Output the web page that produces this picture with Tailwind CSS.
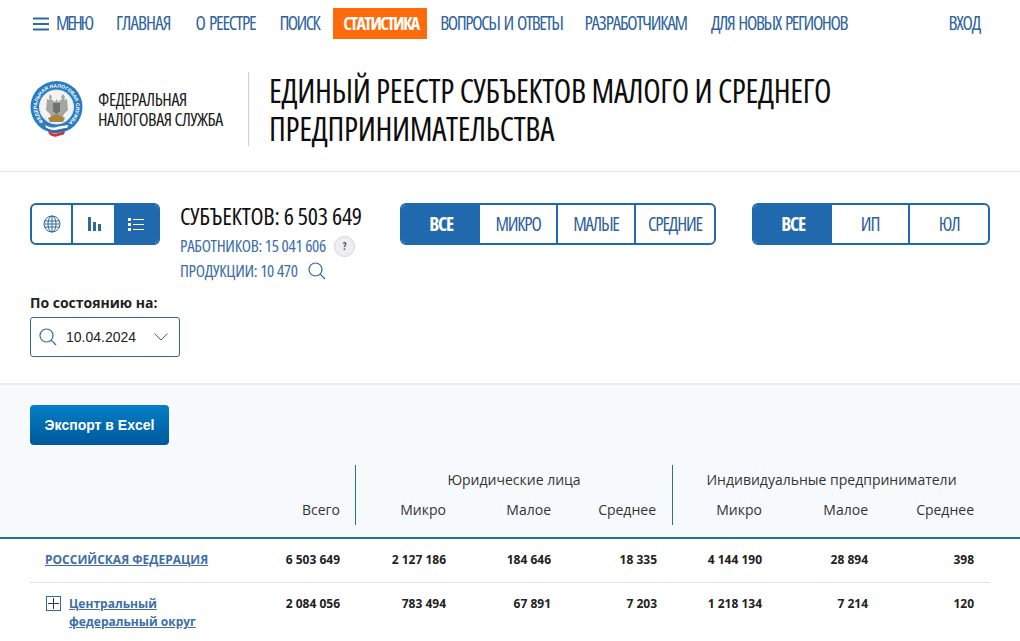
<!DOCTYPE html>
<html lang="ru">
<head>
  <meta charset="UTF-8">
  <title>Статистика - Единый реестр МСП</title>
  <script src="https://cdn.jsdelivr.net/npm/@tailwindcss/browser@4"></script>
</head>
<body class="h-[641px] overflow-hidden bg-white font-['Open_Sans',sans-serif] text-[#1a1a1a]">

<!-- NAV -->
<nav class="flex items-center h-[31px] mt-2 pl-[33px] pr-10 whitespace-nowrap text-[19px] tracking-[-1.2px] [word-spacing:2px] text-[#2f639d] [font-stretch:75%]">
  <svg class="shrink-0 w-4 h-[14px] mr-[7px]" viewBox="0 0 16 14"><path d="M0 1.500h16M0 7h16M0 12.500h16" stroke="#2f6a98" stroke-width="2"/></svg>
  <a class="mr-6 tracking-[-2.2px]">МЕНЮ</a>
  <a class="mr-[25px] tracking-[-0.9px]">ГЛАВНАЯ</a>
  <a class="mr-6">О РЕЕСТРЕ</a>
  <a class="mr-3.5 tracking-[-1.6px]">ПОИСК</a>
  <a class="bg-[#ff6a0a] text-white text-[18px] font-bold px-2.5 w-[94px] h-[31px] leading-[31px] mr-[13px] tracking-[-1.6px]">СТАТИСТИКА</a>
  <a class="mr-[22px] tracking-[-1.4px]">ВОПРОСЫ И ОТВЕТЫ</a>
  <a class="mr-6">РАЗРАБОТЧИКАМ</a>
  <a class="tracking-[-1.4px]">ДЛЯ НОВЫХ РЕГИОНОВ</a>
  <a class="ml-auto">ВХОД</a>
</nav>

<!-- HEADER -->
<header class="flex items-center h-[74px] mt-[33px] pl-[30px] [font-stretch:75%]">
  <svg class="shrink-0 w-[54px] h-[56px]" viewBox="0 0 54 56">
    <circle cx="26.500" cy="26" r="26" fill="#2a7dc0"/>
    <circle cx="26.500" cy="26" r="17" fill="#f3f4f2" stroke="#dfe7ee"/>
    <defs><path id="ring" d="M26.500 45.500a19.500 19.500 0 1 1 .01 0"/></defs>
    <text fill="#fff" font-size="5" font-weight="700" font-family="Liberation Sans"><textPath href="#ring" startOffset="14">ФЕДЕРАЛЬНАЯ НАЛОГОВАЯ СЛУЖБА</textPath></text>
    <path d="M20 13l2 3-1 2 4 3 1.500-3 1.500 3 4-3-1-2 2-3 2 3-1 3 3-1 1 11-4 4-2 5h-10l-2-5-4-4 1-11 3 1-1-3z" fill="#a3a6a3"/>
    <path d="M23 22h7v8l-3.500 3-3.500-3z" fill="#6d7170"/>
    <path d="M18 37l8.500-4 8.500 4-2 4H20z" fill="#a8863f"/>
    <path d="M15 44c6 3 9 3 11.500 2s7-1 12-2l-1.500 3c-5 1-8 1-10.500 2s-6 0-10-2z" fill="#fff"/>
    <path d="M16.500 47c4 2 7.500 2.500 10 2s6-1.500 10.500-2l-1.500 3c-4 .5-7 1.500-9 2s-5.500 0-8.500-2z" fill="#3768b0"/>
    <path d="M18 50c3 2 6 3 8.500 2.500s5-1.500 8.500-2l-1 3c-3 .5-5.500 1.500-7.500 2s-5 0-7.500-2.500z" fill="#d3343c"/>
  </svg>
  <div class="ml-3.5 w-[150px] whitespace-nowrap text-[18px] tracking-[-0.4px] leading-5 text-[#1c1c1c]">ФЕДЕРАЛЬНАЯ<br>НАЛОГОВАЯ СЛУЖБА</div>
  <h1 class="border-l border-[#cfcfcf] h-[74px] pl-5 whitespace-nowrap text-[32px] tracking-[-0.3px] leading-[38px] text-[#0d0d0d]">ЕДИНЫЙ РЕЕСТР СУБЪЕКТОВ МАЛОГО И СРЕДНЕГО<br>ПРЕДПРИНИМАТЕЛЬСТВА</h1>
</header>

<div class="h-px bg-[#e6e6e6] mt-[25px]"></div>

<!-- FILTERS -->
<section class="h-[211px] px-[30px] pt-[31px]">
  <div class="flex items-start">
    <div class="flex w-[130px] h-[42px] border-2 border-[#2069ac] rounded-md overflow-hidden">
      <div class="w-[41px] flex items-center justify-center border-r-2 border-[#2069ac]">
        <svg class="w-[18px] h-[18px]" viewBox="0 0 18 18" fill="none" stroke="#2f6a98"><circle cx="9" cy="9" r="8"/><ellipse cx="9" cy="9" rx="4" ry="8"/><path d="M9 1v16M1.500 6h15M1.500 12h15M1 9h16"/></svg>
      </div>
      <div class="w-[41px] flex items-center justify-center">
        <svg class="w-3.5 h-4" viewBox="0 0 14 16" fill="#2f6a98"><path d="M1 1h3v14H1zM6 6h3v9H6zM11 8h3v7h-3z"/></svg>
      </div>
      <div class="flex-1 flex items-center justify-center bg-[#2069ac]">
        <svg class="w-4 h-[13px]" viewBox="0 0 16 13" fill="#fff"><path d="M0 0h3v3H0zM0 5h3v3H0zM0 10h3v3H0zM5 1h11v1H5zM5 6h11v1H5zM5 11h11v1H5z"/></svg>
      </div>
    </div>

    <div class="ml-5 w-[220px] whitespace-nowrap [font-stretch:75%]">
      <div class="text-[24px] tracking-[-0.25px] leading-[26px] text-[#111]">СУБЪЕКТОВ: 6 503 649</div>
      <div class="flex items-center h-6 mt-[5px] text-[17px] tracking-[-0.3px] text-[#3d6ea8]">РАБОТНИКОВ: 15 041 606
        <span class="ml-2 w-[21px] h-[21px] rounded-full bg-[#eeeeee] border border-[#d5d5d5] text-[10px] font-bold text-[#555] flex items-center justify-center">?</span>
      </div>
      <div class="flex items-center h-6 mt-px text-[17px] tracking-[-0.3px] text-[#3d6ea8]">ПРОДУКЦИИ: 10 470
        <svg class="ml-2.5 w-[18px] h-[18px]" viewBox="0 0 18 18" fill="none" stroke="#2f6a98" stroke-width="1.200"><circle cx="7.500" cy="7.500" r="6.500"/><path d="M12.200 12.200L17 17"/></svg>
      </div>
    </div>

    <div class="flex w-[316px] h-[42px] border-2 border-[#2069ac] rounded-md overflow-hidden text-[19px] tracking-[-1.2px] text-[#2f5f9c] [font-stretch:75%]">
      <div class="w-[78px] flex items-center justify-center bg-[#2069ac] text-white font-bold">ВСЕ</div>
      <div class="w-[78px] flex items-center justify-center border-r-2 border-[#2069ac]">МИКРО</div>
      <div class="w-[78px] flex items-center justify-center border-r-2 border-[#2069ac]">МАЛЫЕ</div>
      <div class="flex-1 flex items-center justify-center">СРЕДНИЕ</div>
    </div>

    <div class="ml-9 flex w-[238px] h-[42px] border-2 border-[#2069ac] rounded-md overflow-hidden text-[19px] tracking-[-1.2px] text-[#2f5f9c] [font-stretch:75%]">
      <div class="w-[78px] flex items-center justify-center bg-[#2069ac] text-white font-bold">ВСЕ</div>
      <div class="w-[78px] flex items-center justify-center border-r-2 border-[#2069ac]">ИП</div>
      <div class="flex-1 flex items-center justify-center">ЮЛ</div>
    </div>
  </div>

  <div class="mt-[10px] text-[14px] leading-5 font-bold text-[#222]">По состоянию на:</div>
  <div class="mt-[4px] flex items-center w-[150px] h-10 border border-[#2f6a98] rounded-[3px] pl-2 pr-[11px] font-['Liberation_Sans',sans-serif] text-[14px] text-[#222]">
    <svg class="w-[18px] h-[18px]" viewBox="0 0 18 18" fill="none" stroke="#2f6a98" stroke-width="1.200"><circle cx="7.500" cy="7.500" r="6.500"/><path d="M12.200 12.200L17 17"/></svg>
    <span class="ml-[9px]">10.04.2024</span>
    <svg class="ml-auto w-[14px] h-2" viewBox="0 0 14 8" fill="none" stroke="#2f6a98"><path d="M.5.500L7 7l6.500-6.500"/></svg>
  </div>
</section>

<!-- TABLE HEAD -->
<section class="border-t-2 border-[#eaeef3] bg-[#f7fafd] h-[156px] border-b-2 border-b-[#2a6f97] px-[30px] pt-5">
  <button class="block w-[139px] h-10 rounded bg-gradient-to-b from-[#0580c6] to-[#01589c] text-white text-[14px] font-bold font-['Liberation_Sans',sans-serif]">Экспорт в Excel</button>
  <div class="grid grid-cols-[326px_317px_1fr] h-[60px] mt-5 text-[14px] text-[#333]">
    <div class="flex items-end justify-end border-r border-[#2a6f97] pb-[5px] pr-[15px]">Всего</div>
    <div class="flex flex-col justify-between border-r border-[#2a6f97] pb-[5px] pt-1">
      <div class="text-center">Юридические лица</div>
      <div class="grid grid-cols-[90px_105px_105px] text-right"><span>Микро</span><span>Малое</span><span>Среднее</span></div>
    </div>
    <div class="flex flex-col justify-between pb-[5px] pt-1">
      <div class="text-center w-[317px]">Индивидуальные предприниматели</div>
      <div class="grid grid-cols-[89px_106px_106px] text-right"><span>Микро</span><span>Малое</span><span>Среднее</span></div>
    </div>
  </div>
</section>

<!-- TABLE ROWS -->
<section class="px-[30px] text-[12px] font-bold text-[#222]">
  <div class="grid grid-cols-[200px_110px_106px_105px_106px_105px_106px_106px] w-[960px] items-center h-11 pb-[2px] border-b border-[#e2e2e2] text-right">
    <a class="text-left whitespace-nowrap pl-[15px] text-[#3d6ea8] underline">РОССИЙСКАЯ ФЕДЕРАЦИЯ</a>
    <span>6 503 649</span><span>2 127 186</span><span>184 646</span><span>18 335</span><span>4 144 190</span><span>28 894</span><span>398</span>
  </div>
  <div class="grid grid-cols-[200px_110px_106px_105px_106px_105px_106px_106px] w-[960px] pt-3 text-right leading-[18px]">
    <div class="flex text-left whitespace-nowrap pl-[16px]">
      <span class="w-[15px] h-[15px] mt-px border border-[#2f6a98] flex items-center justify-center">
        <svg class="w-[11px] h-[11px]" viewBox="0 0 11 11" stroke="#333"><path d="M5.500 0v11M0 5.500h11"/></svg>
      </span>
      <a class="ml-2 text-[#3d6ea8] underline">Центральный<br>федеральный округ</a>
    </div>
    <span>2 084 056</span><span>783 494</span><span>67 891</span><span>7 203</span><span>1 218 134</span><span>7 214</span><span>120</span>
  </div>
</section>

</body>
</html>
